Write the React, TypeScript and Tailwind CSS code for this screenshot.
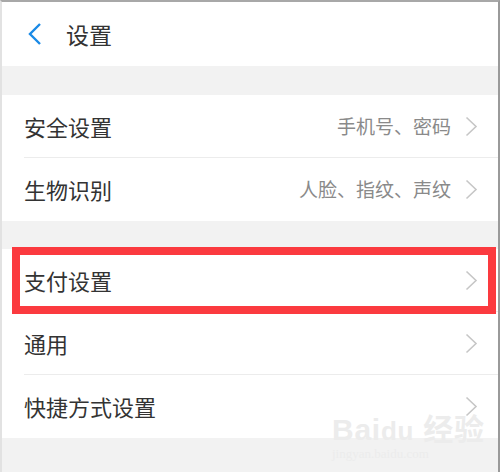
import React from 'react';

const Chevron: React.FC = () => (
    <svg width="13" height="21" viewBox="0 0 13 21" fill="none" className="flex-shrink-0">
        <path d="M1.5 1.5 L11 10.5 L1.5 19.5" stroke="#c6c6c6" strokeWidth="1.6" />
    </svg>
);

type RowProps = { label: string; hint?: string; divider?: boolean };

const Row: React.FC<RowProps> = ({ label, hint, divider }) => (
    <div className="h-[63px] pl-[22px] bg-white">
        <div className={`h-full flex items-center pr-[20px] ${divider ? 'border-b border-[#ececec]' : ''}`}>
            <span className="flex-1 text-[22px] text-[#333]">{label}</span>
            {hint && <span className="text-[19px] text-[#8a8a8a] mr-[14px]">{hint}</span>}
            <Chevron />
        </div>
    </div>
);

export default function App() {
    return (
        <div
            className="relative w-[500px] h-[472px] overflow-hidden bg-[#f2f2f2] border-t-2 border-t-[#a8a8a8] border-l-2 border-l-[#e2e2e2] border-r-2 border-r-[#9a9a9a]"
            style={{ fontFamily: '"Noto Sans CJK SC", "Noto Sans", sans-serif' }}
        >
            {/* Header */}
            <div className="h-[64px] bg-white flex items-center pl-[25px]">
                <svg width="16" height="24" viewBox="0 0 16 24" fill="none">
                    <path d="M13 2 L3 12 L13 22" stroke="#1a8ae6" strokeWidth="2.4" />
                </svg>
                <span className="ml-[23px] text-[23px] text-[#333]">设置</span>
            </div>

            <div className="h-[29px]" />

            <Row label="安全设置" hint="手机号、密码" divider />
            <Row label="生物识别" hint="人脸、指纹、声纹" />

            <div className="h-[28px]" />

            <Row label="支付设置" divider />
            <Row label="通用" divider />
            <Row label="快捷方式设置" />

            {/* Highlight box */}
            <div className="absolute left-[10px] top-[245px] w-[484px] h-[67px] border-[8px] border-[#fb3a3f]" />

            {/* Watermark */}
            <div className="absolute left-[330px] top-[410px] text-[#ececec] leading-none select-none">
                <div className="text-[30px] font-bold tracking-wide" style={{ fontFamily: '"Liberation Sans", sans-serif' }}>
                    Bai<span className="text-[26px]">du</span> <span style={{ fontFamily: '"Noto Sans CJK SC", sans-serif' }}>经验</span>
                </div>
                <div className="text-[13px] mt-[2px]" style={{ fontFamily: '"Liberation Serif", serif' }}>jingyan.baidu.com</div>
            </div>
        </div>
    );
}
